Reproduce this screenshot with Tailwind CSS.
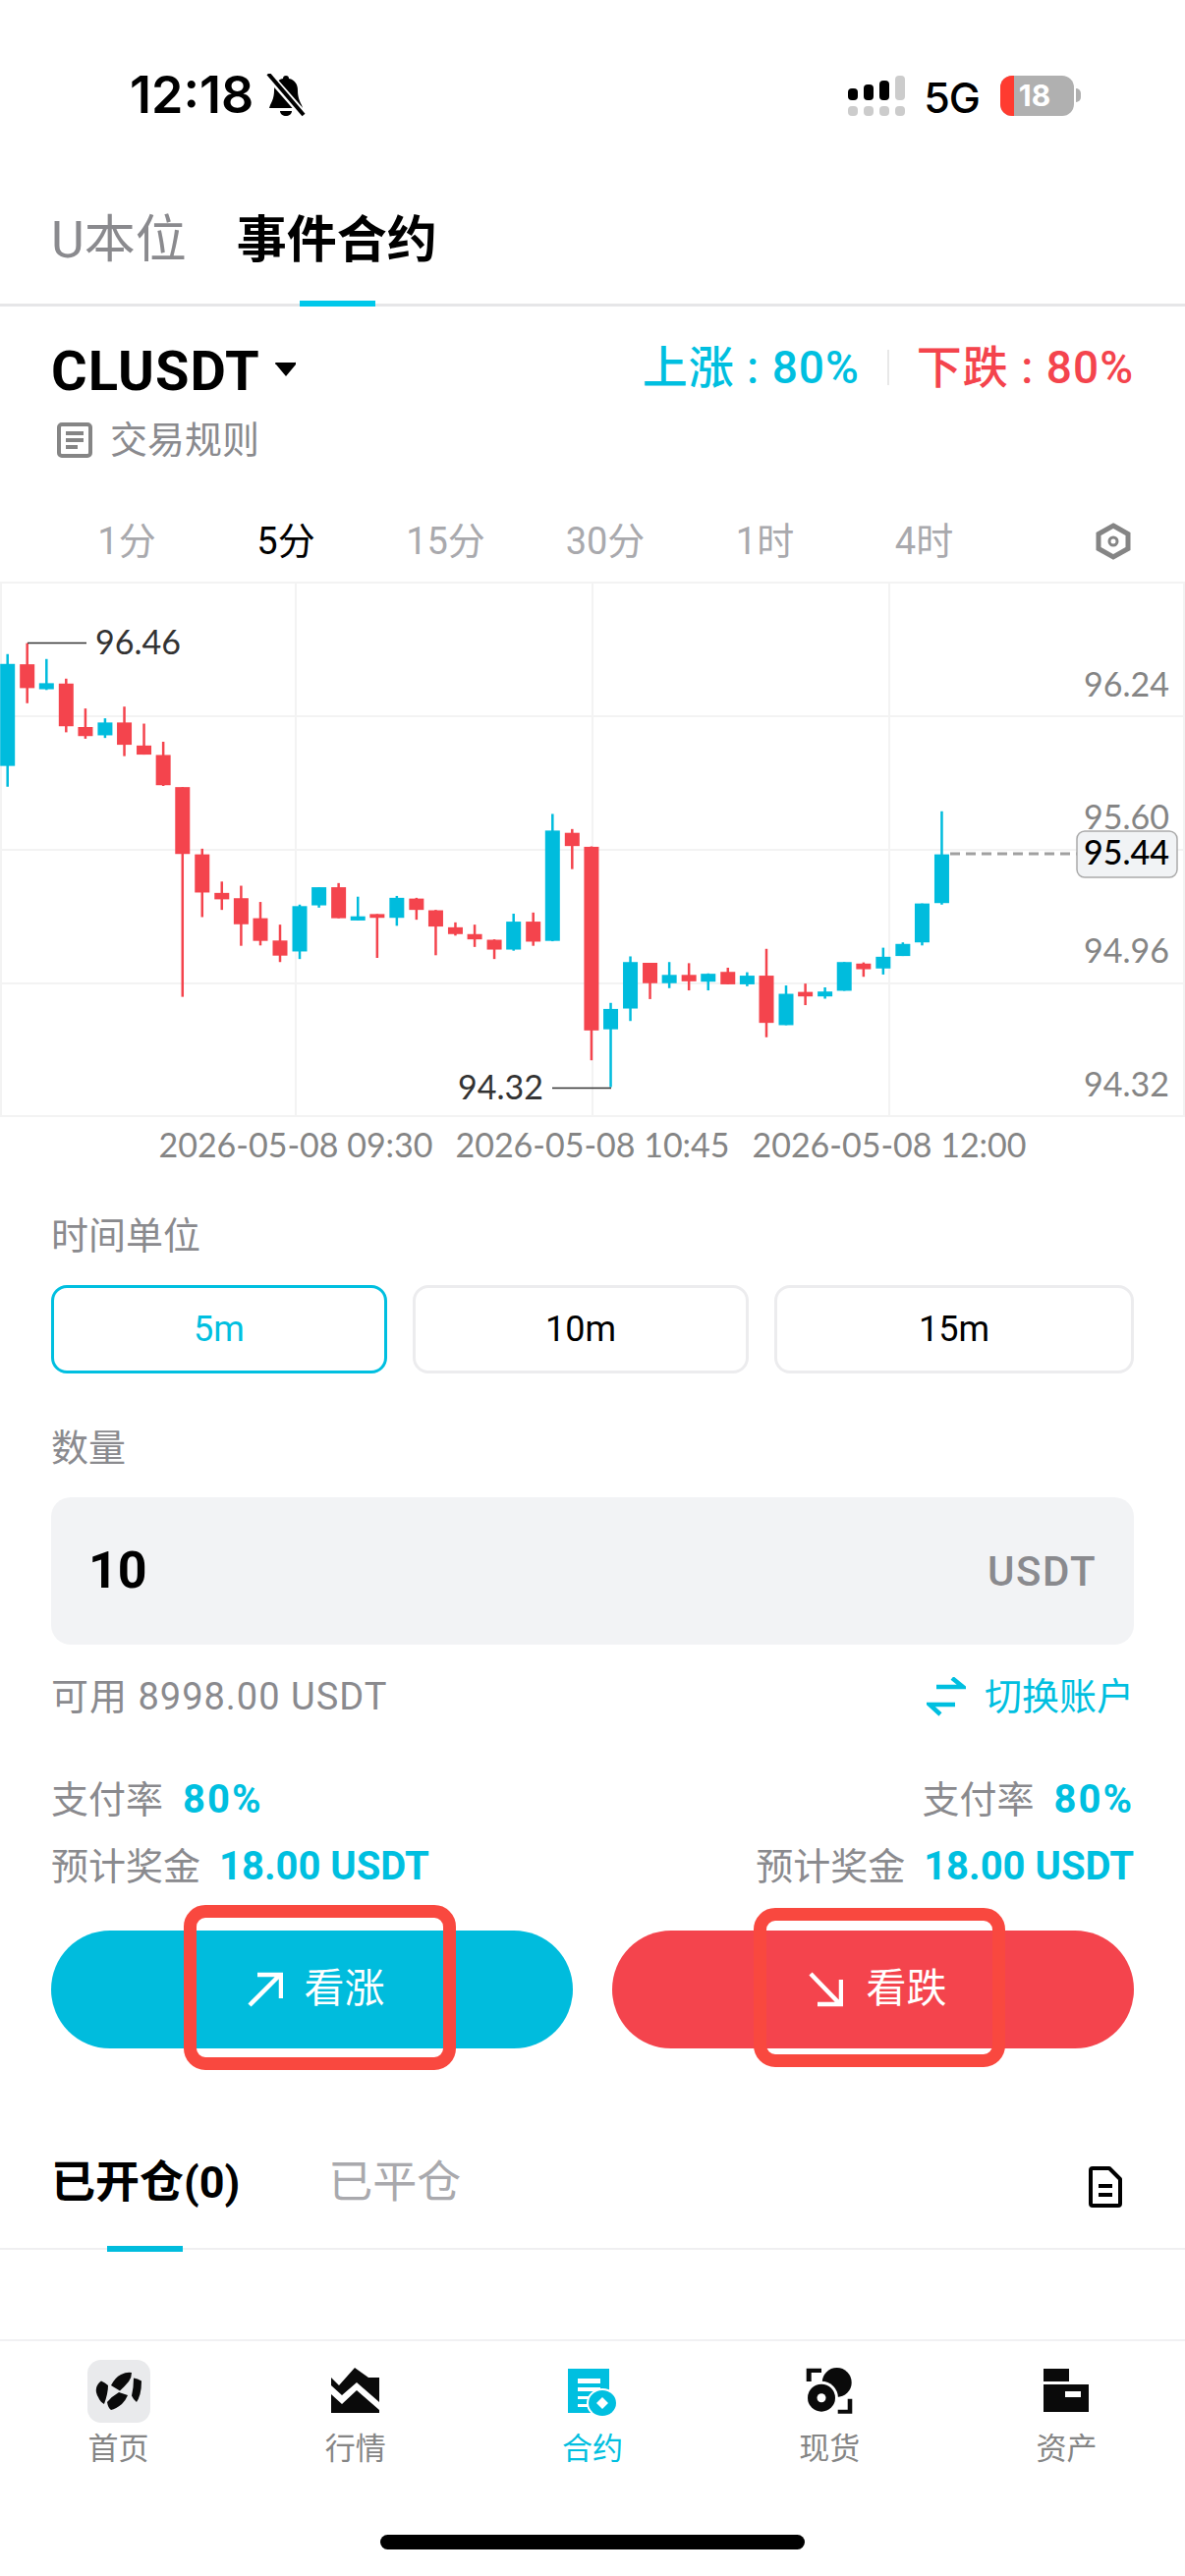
<!DOCTYPE html>
<html lang="zh-CN">
<head>
  <meta charset="UTF-8" />
  <title>事件合约</title>
  <script src="https://cdn.jsdelivr.net/npm/@tailwindcss/browser@4"></script>
</head>
<body class="bg-white">
<div class="relative w-[1206px] h-[2622px] overflow-hidden bg-white flex flex-col font-['Roboto','Noto_Sans_CJK_SC',sans-serif]">

  <!-- status bar -->
  <div class="h-[194px] flex justify-between items-start pt-[67px] pl-[132px] pr-[106px]">
    <div class="flex items-center gap-[12px] h-[60px]">
      <span class="text-[52px] leading-[60px] font-semibold font-['Inter',sans-serif] text-black">12:18</span>
      <svg class="w-[42px] h-[44px]" viewBox="0 0 42 44">
        <path d="M21 2c2 0 3 1 3 3 6 1 9 6 9 12 0 7 2 11 4 15l1 3H4l1-3c2-4 4-8 4-15 0-6 3-11 9-12 0-2 1-3 3-3z" fill="#000"/>
        <path d="M15 38h12c0 3-3 5-6 5s-6-2-6-5z" fill="#000"/>
        <path d="M4 2l35 40" stroke="#fff" stroke-width="8"/>
        <path d="M3 0l36 42" stroke="#000" stroke-width="4"/>
      </svg>
    </div>
    <div class="flex items-center h-[60px]">
      <svg class="w-[58px] h-[41px]" viewBox="0 0 58 41">
        <rect x="0" y="13" width="10" height="12" rx="4" fill="#000"/>
        <rect x="16" y="9" width="10" height="16" rx="4" fill="#000"/>
        <rect x="32" y="5" width="10" height="20" rx="4" fill="#000"/>
        <rect x="48" y="0" width="10" height="25" rx="4" fill="#ccc"/>
        <rect x="0" y="31" width="10" height="10" rx="4" fill="#ccc"/>
        <rect x="16" y="31" width="10" height="10" rx="4" fill="#ccc"/>
        <rect x="32" y="31" width="10" height="10" rx="4" fill="#ccc"/>
        <rect x="48" y="31" width="10" height="10" rx="4" fill="#ccc"/>
      </svg>
      <span class="ml-[19px] mt-[4px] text-[43px] leading-[60px] font-medium font-['Inter',sans-serif] text-black tracking-[-1px]">5G</span>
      <div class="ml-[21px] relative w-[75px] h-[41px] rounded-[12px] overflow-hidden bg-[#b0b0b0] flex items-center justify-center">
        <div class="absolute left-0 top-0 bottom-0 w-[14px] bg-[#ff3b30]"></div>
        <span class="relative mr-[5px] text-[30px] leading-[41px] font-bold font-['Inter',sans-serif] text-white">18</span>
      </div>
      <div class="ml-[2px] w-[5px] h-[14px] rounded-r-full bg-[#b0b0b0]"></div>
    </div>
  </div>

  <!-- product tabs -->
  <div class="h-[118px] border-b-[3px] border-[#e6e6e8] flex gap-[51px] pl-[52px]">
    <span class="mt-[21px] h-[60px] text-[52px] leading-[60px] text-[#8a8a8e]">U本位</span>
    <div class="relative h-[118px]">
      <span class="block mt-[21px] h-[60px] text-[51px] leading-[60px] font-bold text-black">事件合约</span>
      <div class="absolute left-[64px] bottom-0 w-[77px] h-[6px] bg-[#00c8ea]"></div>
    </div>
  </div>

  <!-- symbol -->
  <div class="mt-[36px] h-[60px] flex justify-between pl-[52px] pr-[52px]">
    <div class="flex items-center">
      <span class="text-[56px] leading-[60px] font-bold text-black tracking-[1px]">CLUSDT</span>
      <svg class="ml-[15px] mt-[-4px] w-[21px] h-[16px]" viewBox="0 0 21 16"><path d="M1 1h19a1 1 0 0 1 1 2L11 15 1 3a1 1 0 0 1 0-2z" fill="#000"/></svg>
    </div>
    <div class="flex items-center mt-[-8px] text-[46px] leading-[60px] font-medium tracking-[1px]">
      <span class="text-[#00bfe0]">上涨 : 80%</span>
      <div class="mx-[28px] w-[2px] h-[36px] bg-[#e8e8e8]"></div>
      <span class="text-[#f4444d]">下跌 : 80%</span>
    </div>
  </div>
  <div class="mt-[18px] h-[44px] flex items-center pl-[58px]">
    <svg class="w-[36px] h-[36px]" viewBox="0 0 36 36" fill="none" stroke="#858585" stroke-width="4">
      <rect x="2" y="2" width="32" height="32" rx="3"/>
      <path d="M9 11h18M9 18h18M9 25h12"/>
    </svg>
    <span class="ml-[18px] text-[38px] leading-[44px] text-[#8a8a8e]">交易规则</span>
  </div>

  <!-- interval -->
  <div class="mt-[50px] h-[62px] flex items-center pl-[48px] text-[38px] leading-[62px] text-[#a9a9ad]">
    <span class="w-[162px] text-center">1分</span>
    <span class="w-[162px] text-center text-black">5分</span>
    <span class="w-[163px] text-center">15分</span>
    <span class="w-[162px] text-center">30分</span>
    <span class="w-[163px] text-center">1时</span>
    <span class="w-[161px] text-center">4时</span>
    <svg class="ml-[94px] w-[36px] h-[38px]" viewBox="0 0 36 38" fill="none" stroke="#858585" stroke-width="5">
      <path d="M18 3l15 8.500v15L18 35 3 26.500v-15z"/>
      <circle cx="18" cy="19" r="4" stroke-width="3"/>
    </svg>
  </div>

  <!-- chart -->
  <svg id="chart" class="mt-[8px] block w-[1206px] h-[600px]" viewBox="0 0 1206 600">
    <g stroke="#f3f3f3" stroke-width="2">
      <path d="M0 3h1206M0 139h1206M0 275h1206M0 411h1206M0 546h1206"/>
      <path d="M1 3v543M301 3v543M603 3v543M905 3v543M1205 3v543"/>
    </g>
    <g id="candles"></g>
    <path d="M28 64.500h60M562 517.500h60" stroke="#333" stroke-width="1.500"/>
    <g font-family="Lato, sans-serif" font-size="34">
      <text x="97" y="76" fill="#333">96.46</text>
      <text x="553" y="529" fill="#333" text-anchor="end">94.32</text>
      <g fill="#858585">
        <text x="1190" y="119" text-anchor="end">96.24</text>
        <text x="1190" y="254" text-anchor="end">95.60</text>
        <text x="1190" y="390" text-anchor="end">94.96</text>
        <text x="1190" y="526" text-anchor="end">94.32</text>
      </g>
      <path d="M967 279h131" stroke="#a0a0a0" stroke-width="3" stroke-dasharray="10 6"/>
      <rect x="1096" y="256" width="102" height="47" rx="8" fill="#f1f3f5" stroke="#aaa" stroke-width="1.500"/>
      <text x="1190" y="290" text-anchor="end" fill="#000" font-weight="500">95.44</text>
      <g fill="#858585" text-anchor="middle">
        <text x="301" y="588">2026-05-08 09:30</text>
        <text x="603" y="588">2026-05-08 10:45</text>
        <text x="905" y="588">2026-05-08 12:00</text>
      </g>
    </g>
  </svg>

  <!-- time unit -->
  <div class="mt-[43px] h-[50px] pl-[52px] text-[38px] leading-[50px] text-[#8a8a8e]">时间单位</div>
  <div class="mt-[25px] h-[90px] flex gap-[26px] px-[52px] text-[36px]">
    <div class="w-[342px] rounded-[16px] border-[3px] border-[#00bfe0] text-[#00bfe0] flex items-center justify-center">5m</div>
    <div class="w-[342px] rounded-[16px] border-[3px] border-[#ececee] text-black flex items-center justify-center">10m</div>
    <div class="flex-1 rounded-[16px] border-[3px] border-[#ececee] text-black flex items-center justify-center">15m</div>
  </div>

  <!-- amount -->
  <div class="mt-[51px] h-[50px] pl-[52px] text-[38px] leading-[50px] text-[#8a8a8e]">数量</div>
  <div class="mt-[25px] mx-[52px] h-[150px] rounded-[20px] bg-[#f2f3f5] flex items-center justify-between pl-[38px] pr-[38px]">
    <span class="text-[52px] font-bold text-black">10</span>
    <span class="text-[42px] font-medium text-[#8a8a8e] tracking-[1.500px]">USDT</span>
  </div>
  <div class="mt-[28px] h-[50px] flex justify-between items-center pl-[52px] pr-[52px] text-[38px] leading-[50px]">
    <span class="text-[#8a8a8e] tracking-[1px]">可用 8998.00 USDT</span>
    <div class="flex items-center text-[#00bfe0]">
      <svg class="w-[40px] h-[40px]" viewBox="0 0 40 40" fill="none" stroke="#00bfe0" stroke-width="4.500">
        <path d="M10 10h27L26 1M29 28H3l11 10"/>
      </svg>
      <span class="ml-[19px]">切换账户</span>
    </div>
  </div>

  <!-- payout -->
  <div class="mt-[55px] h-[50px] flex justify-between pl-[52px] pr-[52px] text-[38px] leading-[50px] text-[#8a8a8e]">
    <div>支付率<span class="ml-[20px] text-[40px] tracking-[2px] font-bold text-[#00bfe0]">80%</span></div>
    <div>支付率<span class="ml-[20px] text-[40px] tracking-[2px] font-bold text-[#00bfe0]">80%</span></div>
  </div>
  <div class="mt-[18px] h-[50px] flex justify-between pl-[52px] pr-[52px] text-[38px] leading-[50px] text-[#8a8a8e]">
    <div>预计奖金<span class="ml-[19px] text-[40px] font-bold text-[#00bfe0]">18.00 USDT</span></div>
    <div>预计奖金<span class="ml-[19px] text-[40px] font-bold text-[#00bfe0]">18.00 USDT</span></div>
  </div>

  <!-- actions -->
  <div class="mt-[40px] h-[120px] grid grid-cols-2 gap-[40px] px-[52px] text-[41px] text-white">
    <div class="rounded-full bg-[#00bcdd] flex items-center justify-center pl-[8px]">
      <svg class="w-[36px] h-[36px]" viewBox="0 0 36 36" fill="none" stroke="#fff" stroke-width="4.500"><path d="M10 3h24v24M33 3L2 34"/></svg>
      <span class="ml-[22px]">看涨</span>
    </div>
    <div class="rounded-full bg-[#f4444d] flex items-center justify-center pl-[8px]">
      <svg class="w-[36px] h-[36px]" viewBox="0 0 36 36" fill="none" stroke="#fff" stroke-width="4.500"><path d="M34 8v25H10M33 33L3 2"/></svg>
      <span class="ml-[24px]">看跌</span>
    </div>
  </div>

  <!-- positions tabs -->
  <div class="mt-[107px] h-[98px] border-b-[2px] border-[#efeff1] flex items-start pl-[52px] pr-[64px]">
    <div class="relative h-[98px]">
      <span class="block text-[45px] leading-[60px] font-bold text-black">已开仓(0)</span>
      <div class="absolute left-[57px] bottom-[-2px] w-[77px] h-[6px] bg-[#00bcdd]"></div>
    </div>
    <span class="ml-[90px] text-[45px] leading-[60px] text-[#a9a9ad]">已平仓</span>
    <svg class="ml-auto mt-[13px] w-[34px] h-[42px]" viewBox="0 0 34 42" fill="none" stroke="#000" stroke-width="4">
      <path d="M4 2h17l11 11v25a2 2 0 0 1-2 2H4a2 2 0 0 1-2-2V4a2 2 0 0 1 2-2z" stroke-linejoin="round"/>
      <path d="M10 20h14M10 29h14"/>
    </svg>
  </div>

  <!-- bottom nav -->
  <div class="mt-[91px] flex-1 border-t-[2px] border-[#f1f1f3] flex flex-col">
    <div class="grid grid-cols-5 pt-[19px]">
      <div class="flex flex-col items-center">
        <svg class="w-[64px] h-[64px]" viewBox="0 0 64 64">
          <rect width="64" height="64" rx="14" fill="#e9eaec"/>
          <g fill="#0a0a0a">
            <path d="M14 21.500Q18 23 21 26Q21 34 17 45Q13 43 11 38Q8 33 9 29Q10 24 14 21.500z"/>
            <path d="M24 26Q28 18 34 15Q40 12 45 13Q45 18 42 22Q38 27 33 31.500z"/>
            <path d="M20 43Q25 37 32 33L41 36Q39 41 35 45Q29 50 24 51Q21 49 20 43z"/>
            <path d="M47 18.500Q51 19 55 21.500Q55 29 53.500 35Q52 40 50 43Q47 41 45 36.500Q47 28 47 18.500z"/>
          </g>
        </svg>
      </div>
      <div class="flex flex-col items-center">
        <svg class="mt-[8px] w-[49px] h-[46px]" viewBox="0 0 49 46">
          <path d="M0 10l8 8L24 0l14 10h11v25L26 15 11 28 0 18zM0 27l11 10 15-14 23 20v3H0z" fill="#0a0a0a"/>
        </svg>
      </div>
      <div class="flex flex-col items-center">
        <svg class="mt-[9px] w-[49px] h-[48px]" viewBox="0 0 49 48">
          <path d="M0 0h42v45H0z" fill="#00bfe0"/>
          <path d="M10 10h23v5H10zM10 19h23v4H10zM10 28h11v3H10zM10 36h11v3H10z" fill="#fff"/>
          <ellipse cx="35" cy="35" rx="16" ry="15" fill="#fff"/>
          <ellipse cx="35" cy="35" rx="14" ry="13" fill="#00bfe0"/>
          <path d="M35 29l6 6-6 6-6-6z" fill="#fff"/>
        </svg>
      </div>
      <div class="flex flex-col items-center">
        <svg class="mt-[8px] w-[48px] h-[48px]" viewBox="10 10 48 48">
          <path d="M10.700 24V10.700H26V15H15.700v9zM57.300 41.700V56.700H42.700V52.700H52.700V41.700z" fill="#0a0a0a"/>
          <circle cx="41.700" cy="25" r="15" fill="#0a0a0a"/>
          <circle cx="26" cy="40.700" r="17" fill="#fff"/>
          <circle cx="26" cy="40.700" r="14" fill="#0a0a0a"/>
          <circle cx="26" cy="40.700" r="4.500" fill="#fff"/>
        </svg>
      </div>
      <div class="flex flex-col items-center">
        <svg class="mt-[9px] w-[46px] h-[44px]" viewBox="0 0 46 44">
          <path d="M0 0h26v13H0zM0 16h46v28H0z" fill="#0a0a0a"/>
          <path d="M22 23h16v6H22z" fill="#fff"/>
        </svg>
      </div>
    </div>
    <div class="grid grid-cols-5 mt-[7px] text-[31px] leading-[40px] text-[#858585] text-center">
      <span>首页</span><span>行情</span><span class="text-[#00bfe0]">合约</span><span>现货</span><span>资产</span>
    </div>
    <div class="mt-[67px] mx-auto w-[432px] h-[15px] rounded-full bg-black"></div>
  </div>

  <!-- red annotation boxes -->
  <div class="absolute left-[187px] top-[1939px] w-[277px] h-[168px] rounded-[22px] border-[13px] border-[#f9483f]"></div>
  <div class="absolute left-[767px] top-[1942px] w-[256px] h-[162px] rounded-[22px] border-[13px] border-[#f9483f]"></div>
</div>

<script>
  // x, wick top, wick bottom, body top, body bottom, up? (2.6x crop coordinates)
  const data = [
    [20,197,548,223,493,1],[72,168,327,224,287,0],[123,210,292,274,290,1],[175,262,404,275,388,0],
    [226,341,421,390,414,0],[278,367,419,378,412,1],[329,336,467,378,437,0],[381,381,463,439,463,0],
    [432,429,546,464,544,0],[483,549,1104,549,726,0],[535,712,893,727,828,0],[587,799,874,829,846,0],
    [638,810,969,843,912,0],[689,853,968,896,956,0],[741,913,1012,955,995,0],[793,860,1004,864,984,1],
    [844,814,868,814,862,1],[896,803,896,814,896,0],[947,839,902,891,902,1],[998,885,1001,885,895,0],
    [1050,837,916,842,895,1],[1102,842,900,844,874,0],[1153,874,994,875,918,0],[1205,907,942,920,938,0],
    [1256,913,972,938,952,0],[1308,952,1004,953,979,0],[1359,884,982,905,979,1],[1411,881,969,905,958,0],
    [1462,620,957,664,956,1],[1514,660,766,670,705,0],[1565,706,1272,707,1193,0],
    [1616,1120,1343,1136,1190,1],[1668,997,1168,1012,1135,1],[1720,1014,1110,1014,1068,0],
    [1771,1012,1081,1046,1068,1],[1823,1015,1087,1046,1063,0],[1874,1042,1087,1043,1064,1],
    [1926,1027,1071,1038,1071,0],[1977,1039,1076,1048,1071,1],[2028,977,1211,1048,1173,0],
    [2080,1074,1179,1096,1179,1],[2131,1069,1126,1091,1103,0],[2183,1079,1109,1090,1103,1],
    [2234,1012,1088,1012,1088,1],[2285,1013,1051,1016,1031,0],[2337,974,1045,998,1029,1],
    [2389,960,996,964,996,1],[2440,857,968,857,960,1],[2492,613,860,727,856,1]
  ];
  const k = 2.6;
  document.getElementById("candles").innerHTML = data.map(([x, wt, wb, bt, bb, up]) => {
    const fill = up ? "#00bcdd" : "#f4444d";
    return `<rect x="${x / k - 1.25}" y="${wt / k}" width="2.5" height="${(wb - wt) / k}" fill="${fill}"/>` +
      `<rect x="${x / k - 7.5}" y="${bt / k}" width="15" height="${(bb - bt) / k}" fill="${fill}"/>`;
  }).join("");
</script>
</body>
</html>
